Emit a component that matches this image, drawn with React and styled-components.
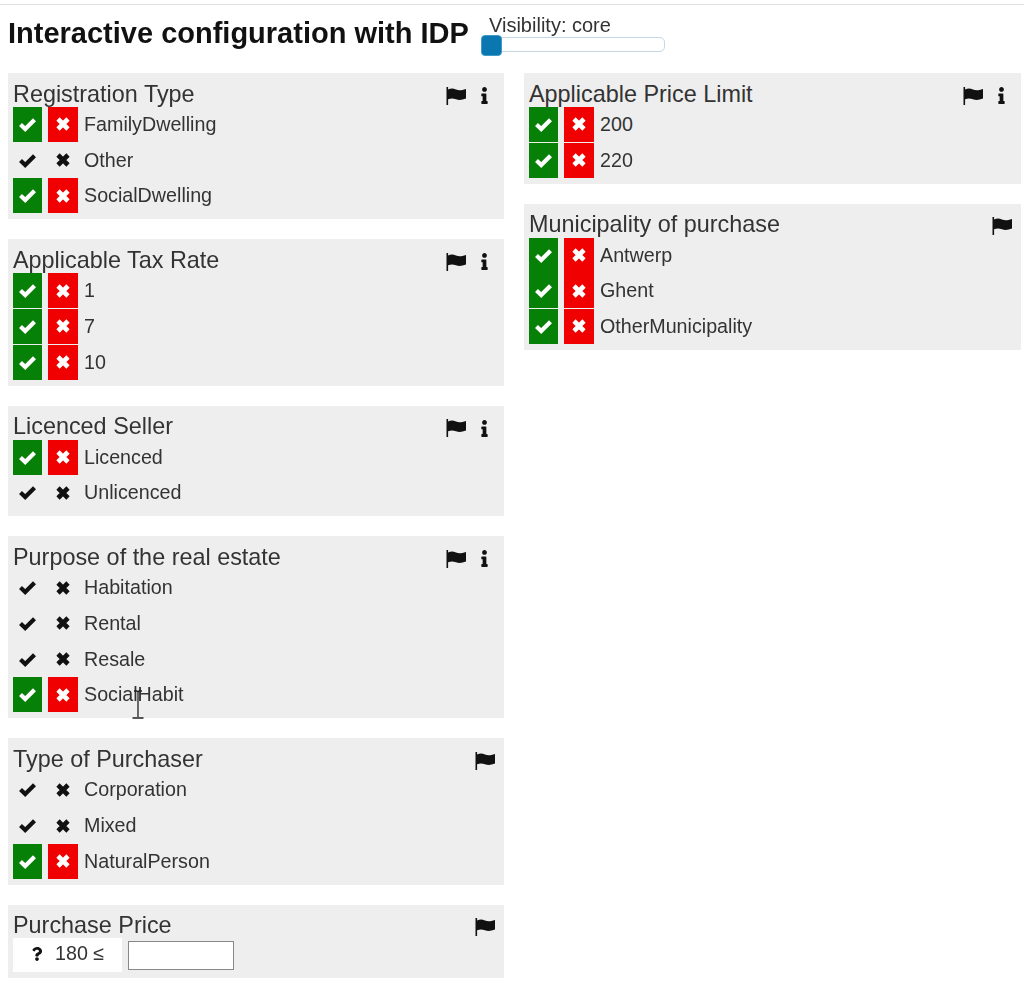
import React from "react";
import styled, { createGlobalStyle } from "styled-components";
import { FaInfo, FaQuestion } from "react-icons/fa";

const GlobalStyle = createGlobalStyle`
  body {
    margin: 0;
    background: #fff;
    font-family: "Liberation Sans", Arial, sans-serif;
    color: #333;
  }
`;

const Page = styled.div`
  position: relative;
  width: 1024px;
  height: 984px;
  margin-top: 4px;
  overflow: hidden;
  box-sizing: border-box;
  border-top: 1px solid #e2e2e2;
  filter: blur(0.5px);
`;

const Header = styled.header`
  display: flex;
  align-items: flex-start;
  height: 68px;
  padding-left: 8px;
`;

const Title = styled.h1`
  margin: 11px 0 0;
  width: 473px;
  font-size: 29px;
  line-height: 34px;
  font-weight: bold;
  color: #111;
  white-space: nowrap;
`;

const VisibilityBox = styled.div`
  display: flex;
  flex-direction: column;
  width: 184px;
`;

const VisibilityLabel = styled.label`
  margin: 9px 0 0 8px;
  font-size: 20px;
  line-height: 22px;
  color: #333;
  white-space: nowrap;
`;

const SliderTrack = styled.div`
  position: relative;
  height: 15px;
  margin-top: 1px;
  box-sizing: border-box;
  border: 1px solid #c5d7e2;
  border-radius: 5px;
  background: #fff;
`;

const SliderHandle = styled.span`
  position: absolute;
  left: -1px;
  top: -3px;
  width: 21px;
  height: 21px;
  border-radius: 4px;
  background: #0a77b0;
  border: 1px solid #3d9ac9;
  box-sizing: border-box;
`;

const Columns = styled.div`
  display: grid;
  grid-template-columns: 496px 497px;
  column-gap: 20px;
  padding-left: 8px;
  align-items: start;
`;

const Column = styled.div`
  display: flex;
  flex-direction: column;
  gap: 20px;
`;

const Panel = styled.section`
  background: #eee;
  padding: 0 5px 5.7px;
`;

const PanelHead = styled.div`
  display: flex;
  align-items: flex-end;
  height: 33.6px;
`;

const PanelTitle = styled.h2`
  flex: 1;
  margin: 0;
  font-size: 23.4px;
  line-height: 26px;
  font-weight: normal;
  color: #333;
`;

const HeadIcon = styled.span`
  display: flex;
  justify-content: center;
  align-items: center;
  width: 29px;
  height: 20px;
  margin-bottom: 1px;
  color: #111;
`;

const Row = styled.div`
  display: flex;
  align-items: center;
  height: 35.7px;
`;

const ToggleButton = styled.span`
  display: flex;
  justify-content: center;
  align-items: center;
  width: ${(p) => p.$w}px;
  height: 35px;
  margin-right: 6px;
  color: ${(p) => (p.$on ? "#fff" : "#111")};
  background: ${(p) => (p.$on ? p.$bg : "transparent")};
`;

const RowLabel = styled.span`
  font-size: 19.7px;
  color: #333;
`;

const BoundRow = styled.div`
  display: flex;
  align-items: flex-start;
  height: 33.7px;
`;

const BoundBox = styled.div`
  display: flex;
  align-items: center;
  width: 109px;
  height: 34px;
  margin-right: 6px;
  box-sizing: border-box;
  padding: 0 0 3px 17px;
  background: #fff;
  color: #111;
  font-size: 19.7px;
`;

const BoundValue = styled.span`
  margin-left: 11px;
  color: #333;
`;

const BoundInput = styled.input`
  width: 106px;
  height: 29px;
  margin-top: 2.5px;
  box-sizing: border-box;
  border: 1px solid #888;
  background: #fff;
`;

const Cursor = styled.svg`
  position: absolute;
  left: 132px;
  top: 685px;
`;

function CheckIcon() {
  return (
    <svg width="19" height="15" viewBox="0 0 19 15">
      <polyline points="2.5,7.5 7.2,12 16.5,2.8" fill="none" stroke="currentColor" strokeWidth="4.2" />
    </svg>
  );
}

function CrossIcon() {
  return (
    <svg width="16" height="16" viewBox="0 0 16 16">
      <path d="M3 3l10 10M13 3L3 13" fill="none" stroke="currentColor" strokeWidth="4.6" />
    </svg>
  );
}

function FlagIcon() {
  return (
    <svg width="20" height="18" viewBox="0 0 20 18">
      <path d="M0.5 0h1.6v18H0.5z" fill="currentColor" />
      <path d="M2 2.5c3-1.2 5-1.2 8 0 3 1 5.5 .8 10-.6v9.6c-4 1.6-7 1.8-10 .8-3-1.1-5-1.1-8 0z" fill="currentColor" />
    </svg>
  );
}

function Option({ label, active }) {
  return (
    <Row>
      <ToggleButton $w={29} $on={active} $bg="#078007">
        <CheckIcon />
      </ToggleButton>
      <ToggleButton $w={30} $on={active} $bg="#f00000">
        <CrossIcon />
      </ToggleButton>
      <RowLabel>{label}</RowLabel>
    </Row>
  );
}

function Group({ title, info, children }) {
  return (
    <Panel>
      <PanelHead>
        <PanelTitle>{title}</PanelTitle>
        <HeadIcon>
          <FlagIcon />
        </HeadIcon>
        {info && (
          <HeadIcon>
            <FaInfo size={17} />
          </HeadIcon>
        )}
      </PanelHead>
      {children}
    </Panel>
  );
}

const leftGroups = [
  {
    title: "Registration Type",
    info: true,
    options: [["FamilyDwelling", true], ["Other", false], ["SocialDwelling", true]],
  },
  {
    title: "Applicable Tax Rate",
    info: true,
    options: [["1", true], ["7", true], ["10", true]],
  },
  {
    title: "Licenced Seller",
    info: true,
    options: [["Licenced", true], ["Unlicenced", false]],
  },
  {
    title: "Purpose of the real estate",
    info: true,
    options: [["Habitation", false], ["Rental", false], ["Resale", false], ["SocialHabit", true]],
  },
  {
    title: "Type of Purchaser",
    options: [["Corporation", false], ["Mixed", false], ["NaturalPerson", true]],
  },
];

const rightGroups = [
  {
    title: "Applicable Price Limit",
    info: true,
    options: [["200", true], ["220", true]],
  },
  {
    title: "Municipality of purchase",
    options: [["Antwerp", true], ["Ghent", true], ["OtherMunicipality", true]],
  },
];

function renderGroup(g) {
  return (
    <Group key={g.title} title={g.title} info={g.info}>
      {g.options.map(([label, active]) => (
        <Option key={label} label={label} active={active} />
      ))}
    </Group>
  );
}

export default function App() {
  return (
    <Page>
      <GlobalStyle />
      <Header>
        <Title>Interactive configuration with IDP</Title>
        <VisibilityBox>
          <VisibilityLabel>Visibility: core</VisibilityLabel>
          <SliderTrack>
            <SliderHandle />
          </SliderTrack>
        </VisibilityBox>
      </Header>
      <Columns>
        <Column>
          {leftGroups.map(renderGroup)}
          <Group title="Purchase Price">
            <BoundRow>
              <BoundBox>
                <FaQuestion size={14} />
                <BoundValue>180 ≤</BoundValue>
              </BoundBox>
              <BoundInput type="text" />
            </BoundRow>
          </Group>
        </Column>
        <Column>{rightGroups.map(renderGroup)}</Column>
      </Columns>
      <Cursor width="12" height="30" viewBox="0 0 12 30">
        <path d="M2 1h3l1 1 1-1h3M6 2v25M0.5 28h11" fill="none" stroke="#222" strokeWidth="1.3" />
      </Cursor>
    </Page>
  );
}
